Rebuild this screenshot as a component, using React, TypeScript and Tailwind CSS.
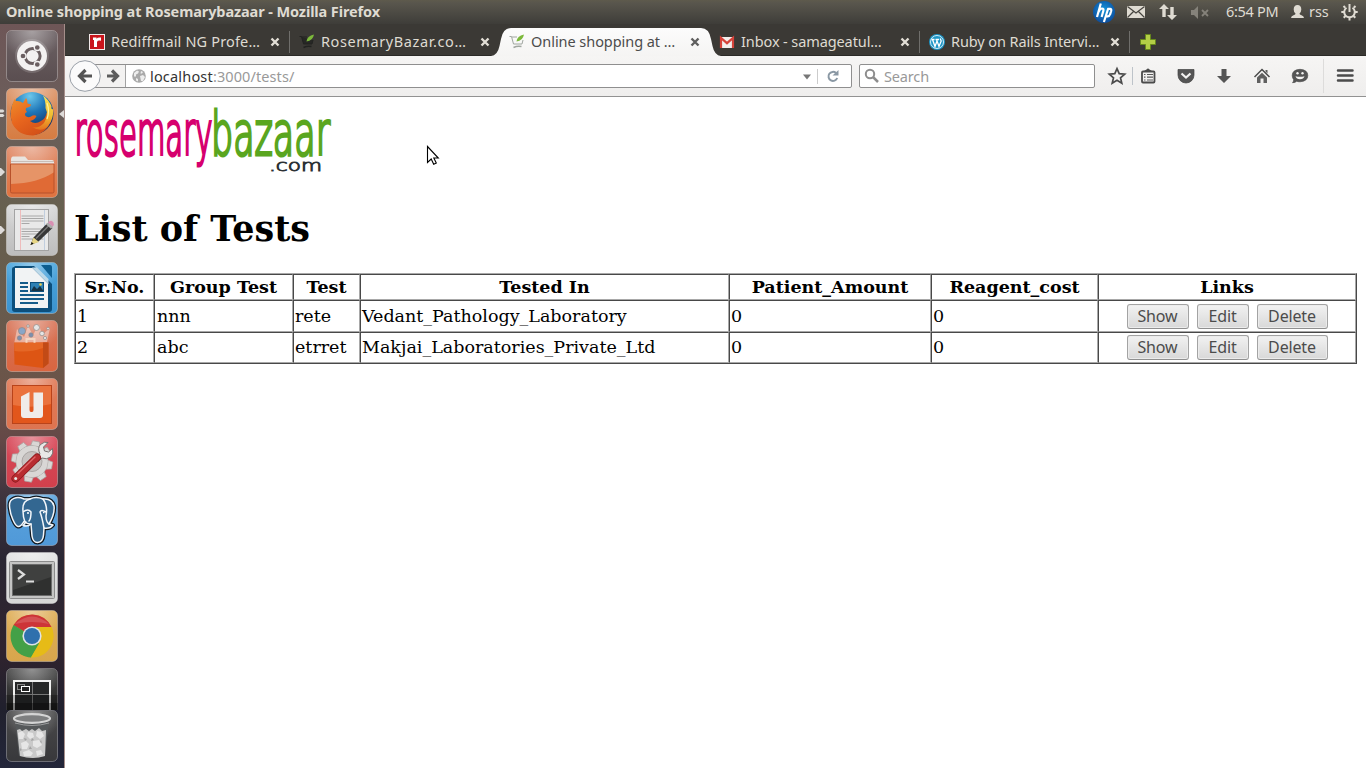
import type { ReactNode } from 'react';

const UI = "font-['Noto_Sans',sans-serif]";

/* ---------- launcher tiles ---------- */

function Tile({ from, to, children, h = 52, edge = '#ffffff' }: { from: string; to: string; children?: ReactNode; h?: number; edge?: string }) {
  const id = 'g' + from.slice(1) + to.slice(1) + h;
  return (
    <svg width="52" height={h} viewBox={`0 0 52 ${h}`} className="block shrink-0">
      <defs>
        <linearGradient id={id} x1="0" y1="0" x2="0" y2="1">
          <stop offset="0" stopColor={from} />
          <stop offset="1" stopColor={to} />
        </linearGradient>
        <radialGradient id={id + 's'} cx="0.5" cy="0" r="0.6">
          <stop offset="0" stopColor="#fff" stopOpacity="0.4" />
          <stop offset="1" stopColor="#fff" stopOpacity="0" />
        </radialGradient>
      </defs>
      <rect x="0.500" y="0.500" width="51" height="51" rx="5" fill={`url(#${id})`} stroke={edge} strokeOpacity="0.3" />
      <rect x="1" y="1" width="50" height="50" rx="5" fill={`url(#${id}s)`} />
      {children}
    </svg>
  );
}

function Dash() {
  return (
    <Tile from="#6d6265" to="#5a4e50">
      <circle cx="26" cy="26" r="17" fill="#fff" opacity="0.15" />
      <circle cx="26" cy="26" r="15" fill="#f3f1f1" />
      <circle cx="26.500" cy="26" r="7.600" fill="none" stroke="#6a5e60" strokeWidth="3" />
      <g fill="#6a5e60" stroke="#f3f1f1" strokeWidth="1.300">
        <circle cx="17" cy="26" r="3" />
        <circle cx="31.300" cy="17.500" r="3" />
        <circle cx="31.300" cy="34.500" r="3" />
      </g>
    </Tile>
  );
}

function FirefoxIcon() {
  return (
    <Tile from="#dc9468" to="#d67c42">
      <defs>
        <radialGradient id="globe" cx="0.45" cy="0.1" r="0.75">
          <stop offset="0" stopColor="#6cc8ec" />
          <stop offset="0.5" stopColor="#1f76b8" />
          <stop offset="1" stopColor="#12386f" />
        </radialGradient>
        <linearGradient id="fox" x1="0" y1="0" x2="0.7" y2="1">
          <stop offset="0" stopColor="#ee8f2c" />
          <stop offset="0.5" stopColor="#e8661e" />
          <stop offset="1" stopColor="#d24f18" />
        </linearGradient>
        <linearGradient id="tail" x1="0" y1="0" x2="0" y2="1">
          <stop offset="0" stopColor="#f7e25a" />
          <stop offset="0.6" stopColor="#f0bb30" />
          <stop offset="1" stopColor="#e4701e" />
        </linearGradient>
      </defs>
      <circle cx="26" cy="25.500" r="21.500" fill="url(#globe)" />
      <path d="M8 12Q9 10 10 13Q14 12.500 17 15L20 10Q22 12 21.500 15.500L25 16.500Q25.500 18.500 20 20Q19 22 21 24Q18 25 19.500 28Q22 30 25 28.500Q28 26.500 30.500 28Q29 32 24 33Q29 37 35 33Q40 30 40.500 25Q45 28 45 33Q40 46 27 47.500Q12 47.500 6 35Q2.500 24 8 12Z" fill="url(#fox)" />
      <path d="M37 7.500Q40 13 39.500 20Q43 27 38 35Q32 41 26 39Q36 45 42 38Q48 31 47 21Q45 22 45.500 18Q42 11 37 7.500Z" fill="url(#tail)" />
      <path d="M41 15Q44 23 41 31" fill="none" stroke="#fff3a0" strokeWidth="1.200" />
    </Tile>
  );
}

function FilesIcon() {
  return (
    <Tile from="#e08a68" to="#df7340">
      <path d="M5 14q0-3.500 2-3.500h12l3 3.500h24q2 0 2 2v5H5z" fill="#e8e4e0" />
      <path d="M5 15.500h43" stroke="#bcaea5" strokeWidth="0.700" />
      <path d="M4.500 18h43.500v27.500q0 1.500-1.500 1.500H6q-1.500 0-1.500-1.500z" fill="#e06a35" stroke="#b8512a" />
      <path d="M5 18.500h42.500v8Q32 37 5 38z" fill="#e9b088" opacity="0.6" />
    </Tile>
  );
}

function EditorIcon() {
  const rows = [12, 14.500, 17, 19.500, 25, 27.500, 30, 32.500, 35];
  return (
    <Tile from="#d8d8d8" to="#bdbdbd">
      <rect x="8.500" y="5.500" width="34" height="41" fill="#e9e9e9" stroke="#a3a3a3" />
      <path d="M14.500 6v40" stroke="#efb0b0" strokeWidth="0.800" />
      <path d="M38.500 6v40" stroke="#b6c6da" strokeWidth="0.800" />
      {rows.map((y, i) => <path key={y} d={`M15.500 ${y}h${i % 4 === 3 ? 8 : 22}`} stroke="#a0a0a0" strokeWidth="0.900" />)}
      <path d="M24.500 41l3-7.500L41 19.500l5.500 4.500-14 13.500z" fill="#373737" />
      <path d="M30 34.500L43 21.500" stroke="#777" strokeWidth="1.500" />
      <path d="M24.500 41l3-7.500 5.500 4.500z" fill="#e7d685" />
      <path d="M24.500 41l1.200-3 2 1.700z" fill="#111" />
      <path d="M40 20.500l2-2 5 4-2 2.200z" fill="#aaa" />
      <path d="M42 18.500q2-2.500 4-1.500l1.500 1.500q1 2-0.800 4z" fill="#d990b3" />
    </Tile>
  );
}

function WriterIcon() {
  return (
    <Tile from="#4ba6de" to="#3b93cf">
      <path d="M8 5q-2 0-2 2v40q0 3 3 3h34q3 0 3-3V22L28 4H9z" fill="#0c4f7c" />
      <path d="M35 3h9q2 0 2 2v11z" fill="#0c5d8f" />
      <path d="M9 6h17.500L42 21.500V46H9z" fill="#f1f3f4" />
      <path d="M26 5.500L42.500 22v-5L31 5.500z" fill="#bcd9e9" />
      <g stroke="#155c8a" strokeWidth="2">
        <path d="M14 21h8M14 25h8M14 29h8M14 33h24M14 37h24M14 41h18" />
      </g>
      <rect x="24.500" y="20.500" width="13" height="9" fill="#2d80b4" stroke="#0c4f7c" />
      <path d="M25 29l3-5 3 3 3-3 3.500 5z" fill="#173345" />
      <circle cx="34.500" cy="22.500" r="1.300" fill="#ecd04c" />
    </Tile>
  );
}

function SoftwareIcon() {
  return (
    <Tile from="#d8765a" to="#d96540">
      <path d="M8 24L11 9l7 8 4-11 5 9 6-11 3 11 8-7-3 14z" fill="#fff" opacity="0.4" />
      <g fill="#e5e5e5" stroke="#8f8a86" strokeWidth="0.700">
        <circle cx="16" cy="11" r="3.500" fill="#88a6c8" />
        <circle cx="30.500" cy="7.500" r="3" />
        <circle cx="36" cy="13.500" r="2.300" />
        <circle cx="25" cy="15" r="2.200" fill="#7b8fb0" />
        <circle cx="13.500" cy="18" r="2.200" fill="#7b8fb0" />
        <circle cx="42" cy="8.500" r="1.300" />
        <circle cx="39" cy="18" r="1.600" />
        <circle cx="22" cy="6" r="1.300" />
      </g>
      <path d="M8 22.500h34.500v21L37 48 8.500 44.500z" fill="#dd5514" />
      <path d="M37 22.500h5.500v21L37 48z" fill="#c24a16" />
      <path d="M20.500 23v-4h8v4" fill="none" stroke="#f4d6c2" strokeWidth="2" />
      <path d="M8.500 31q15 2 28.500-3v-5.500H8z" fill="#ee7a37" opacity="0.5" />
    </Tile>
  );
}

function UbuntuOneIcon() {
  return (
    <Tile from="#e07b58" to="#dd7450">
      <rect x="6.500" y="7.500" width="39" height="38" fill="#e2561c" stroke="#b9431a" />
      <path d="M7 8h38v18Q26 31 7 27z" fill="#ee7f4b" opacity="0.7" />
      <path d="M15 18.500L23.500 14V32q0 2 1.500 2h1q1.500 0 1.500-2V14.500H37V37q0 3-3 3H18q-3 0-3-3z" fill="#f0ece9" />
    </Tile>
  );
}

function SettingsIcon() {
  return (
    <Tile from="#d8495a" to="#d0404c">
      <g fill="#d9d7d5" stroke="#a9a5a3" strokeWidth="0.700">
        {[0, 45, 90, 135, 180, 225, 270, 315].map((a) => (
          <path key={a} d="M21.500 12l1.500-7h7l1.500 7z" transform={`rotate(${a + 10} 26 25.500)`} />
        ))}
        <circle cx="26" cy="25.500" r="16" />
      </g>
      <circle cx="26" cy="25.500" r="15.500" fill="#d9d7d5" />
      <circle cx="26" cy="25.500" r="10" fill="#c7c3c1" stroke="#aaa6a4" />
      <path d="M30 23l4-5q-3-6 0.500-9.500 4-3.500 7.500-2l-4.500 4.500 1 4 4 1 4-3.500q1.500 5-2 8.500-4 3-8.500 1l-4 4z" fill="#e9e8e7" stroke="#6d6866" strokeWidth="0.900" />
      <path d="M9.500 42.500L31 21.500" stroke="#8e1a1e" strokeWidth="8" strokeLinecap="round" />
      <path d="M9.500 42.500L31 21.500" stroke="#b82c30" strokeWidth="6.300" strokeLinecap="round" />
      <path d="M12 37.500L29 21" stroke="#e0686a" strokeWidth="1.300" strokeLinecap="round" />
      <circle cx="9.700" cy="42.500" r="1.500" fill="#e9e8e7" />
    </Tile>
  );
}

function PostgresIcon() {
  const body = 'M18 5C11 2 3 4 3.500 12C4 21 9 32 12 32.500C15 33 17 29 18 27.500C20 29 23 30.500 25 30L26 42Q27 48.500 31.500 48.500Q37 48 37.500 41L38 34Q44 35 47 31L43 30Q49 20 48 12Q46 4 37 5Q30 2 24 5Z';
  return (
    <Tile from="#5aa3dd" to="#5099d8">
      <path d={body} stroke="#111820" strokeWidth="4" fill="#336791" strokeLinejoin="round" />
      <g stroke="#f2f6fa" strokeWidth="1.500" fill="#336791" strokeLinejoin="round" strokeLinecap="round">
        <path d={body} />
        <path d="M24 5Q16 7 17 17Q17 23 19 28M17 18Q22 14 25 18Q25 25 23 27M25 30Q22 33 17 31.500L20 28M37 5Q42 12 40 22Q40 28 43 30M40 18Q35 15 34 18Q36 23 38 34" fill="none" />
      </g>
      <path d="M21 19h2M37 18.500h1.500" stroke="#fff" strokeWidth="1.500" />
    </Tile>
  );
}

function TerminalIcon() {
  return (
    <Tile from="#e3e3e3" to="#d6d6d6">
      <rect x="3.500" y="9.500" width="45" height="37" rx="1" fill="#c4c4c3" stroke="#8b8b8b" />
      <rect x="6.500" y="12.500" width="39" height="31" fill="#2f302f" stroke="#6c6c6c" />
      <path d="M7 13h38v12L7 38z" fill="#fff" opacity="0.08" />
      <path d="M12 18l6 4.500-6 4.500" fill="none" stroke="#dcdcdc" strokeWidth="2.200" />
      <path d="M20 29.500h8" stroke="#dcdcdc" strokeWidth="2" />
    </Tile>
  );
}

function ChromeIcon() {
  return (
    <Tile from="#dfae58" to="#d8a64c">
      <circle cx="26" cy="26" r="21.300" fill="#e6b916" />
      <path d="M26 26L7.300 15.200A21.500 21.500 0 0 1 45.500 17z" fill="#cd3437" />
      <path d="M26 26L7.600 15A21.500 21.500 0 0 0 25 47.500l8-14z" fill="#43a047" />
      <path d="M26 17h19.500A21.500 21.500 0 0 1 25 47.500L35 31z" fill="#e6bb17" />
      <circle cx="26" cy="26" r="9.600" fill="#dfe3e6" />
      <circle cx="26" cy="26" r="8" fill="#2f70ad" />
      <path d="M9 14q17-15 34 0-17-4-34 0z" fill="#fff" opacity="0.15" />
    </Tile>
  );
}

function WorkspaceIcon() {
  return (
    <Tile from="#4a4a4a" to="#1b1b1b" h={42}>
      <path d="M8 42V13h36v29" fill="#262728" stroke="#f2f2f2" strokeWidth="2" />
      <path d="M26.500 14v28M9 26.500h34" stroke="#777" strokeWidth="1" />
      <rect x="11.500" y="16.500" width="7" height="5" fill="none" stroke="#888" />
      <rect x="15.500" y="18.500" width="8" height="5" fill="#222" stroke="#fff" />
      <rect x="0" y="27" width="52" height="8" fill="#000" opacity="0.25" />
      <rect x="0" y="35" width="52" height="7" fill="#000" opacity="0.5" />
    </Tile>
  );
}

function TrashIcon() {
  return (
    <Tile from="#4a4a4b" to="#38383b">
      <path d="M9 9l4 37q13 3.500 26 0l4-37z" fill="#55585a" />
      <path d="M11 20l3-1 2 2 4-2 3 2 3-2 3 2 4-3 3 3 4-1-1 26q-12 4-25 0z" fill="#c9c9c9" />
      <g fill="#e6e6e6">
        <path d="M12 23l4-2 3 3-2 5-4 0zM22 22l5 1 1 4-4 2-3-3zM31 21l5 1 2 4-4 3-4-3zM15 33l5-2 3 3-2 5-5 0zM27 31l6-1 3 5-5 3-4-2zM17 42l6-2 4 3-2 3-7 0zM30 41l5-1 2 4-6 2z" />
      </g>
      <g fill="#a2a2a2">
        <path d="M18 28l3 1-2 2zM26 28l2 2-3 1zM24 36l2 3-3 0zM35 30l1 3-2-1zM14 38l2 2-2 1z" />
      </g>
      <ellipse cx="26" cy="8.500" rx="18" ry="4.300" fill="#7e7f80" stroke="#d4d4d4" strokeWidth="2.200" />
      <path d="M9 13q17 5 34 0" fill="none" stroke="#9d9e9f" strokeWidth="1" />
    </Tile>
  );
}

function Row({ left, right, children }: { left?: 'one' | 'two'; right?: boolean; children: ReactNode }) {
  return (
    <div className="flex w-[64px] shrink-0 items-center">
      <svg width="6" height="14" viewBox="0 0 6 14" className="block shrink-0" fill="#dedbd9">
        {left === 'one' && <path d="M0 3h1l4 4-4 4H0z" />}
        {left === 'two' && <path d="M0 2.500h3l1.500 1.500-1.500 1.500H0zM0 7h3l1.500 1.500L3 10H0z" />}
      </svg>
      {children}
      <svg width="6" height="14" viewBox="0 0 6 14" className="block shrink-0" fill="#dedbd9">
        {right && <path d="M6 3L1 7l5 4z" />}
      </svg>
    </div>
  );
}

function Launcher() {
  return (
    <aside className="flex w-[65px] shrink-0 flex-col gap-[6px] overflow-hidden border-r border-[#a58e8a] bg-[linear-gradient(180deg,#6e5657_0%,#6b5e5b_12%,#67604f_25%,#685b4d_38%,#6b5348_50%,#644847_56%,#40353f_63%,#2a2633_72%,#30232e_84%,#20202d_92%,#23263a_100%)] pt-[6px]">
      <Row><Dash /></Row>
      <Row left="two" right><FirefoxIcon /></Row>
      <Row left="one"><FilesIcon /></Row>
      <Row left="one"><EditorIcon /></Row>
      <Row><WriterIcon /></Row>
      <Row><SoftwareIcon /></Row>
      <Row><UbuntuOneIcon /></Row>
      <Row><SettingsIcon /></Row>
      <Row><PostgresIcon /></Row>
      <Row><TerminalIcon /></Row>
      <Row><ChromeIcon /></Row>
      <div className="flex flex-col">
        <Row><WorkspaceIcon /></Row>
        <Row><TrashIcon /></Row>
      </div>
    </aside>
  );
}

/* ---------- top panel ---------- */

function TopPanel() {
  return (
    <header className={`flex h-[24px] shrink-0 items-center bg-[linear-gradient(180deg,#5e5a4c_0%,#59564d_12%,#3e3d39_100%)] text-[#dfdbd2] ${UI}`}>
      <h1 className="w-[1092px] shrink-0 whitespace-nowrap pb-[2px] pl-[6px] text-[14.500px] font-bold leading-[22px] tracking-[-0.100px]">Online shopping at Rosemarybazaar - Mozilla Firefox</h1>
      <svg width="24" height="24" viewBox="0 0 24 24" className="shrink-0">
        <defs>
          <radialGradient id="hp" cx="0.5" cy="0.4" r="0.6">
            <stop offset="0" stopColor="#1596dc" />
            <stop offset="1" stopColor="#0c4c9c" />
          </radialGradient>
        </defs>
        <circle cx="12" cy="12" r="11" fill="url(#hp)" />
        <path d="M8.800 3.500L5 17M6.500 12q1.500-3.500 3.500-3.500t1.300 2.500l-1.700 6M16.200 8.500l-4.300 13.500M15.500 8.800h2.500q1.800 0 1.100 2.500l-1 3q-.6 2-2.400 2h-2" fill="none" stroke="#fff" strokeWidth="2.200" />
      </svg>
      <svg width="40" height="24" viewBox="0 0 40 24" className="shrink-0" fill="#dfdbd2">
        <rect x="11" y="6" width="18" height="12" />
        <path d="M11.500 6.500l8.500 6.500 8.500-6.500M11.500 17.500l6-6M28.500 17.500l-6-6" fill="none" stroke="#46443f" strokeWidth="1.200" />
      </svg>
      <svg width="28" height="24" viewBox="0 0 28 24" className="shrink-0" fill="#dfdbd2">
        <path d="M8 4l5 5h-3.300v8H6.300V9H3zM16 20l-5-5h3.300V7h3.400v8H21z" />
      </svg>
      <svg width="34" height="24" viewBox="0 0 34 24" className="shrink-0" fill="#85827a">
        <path d="M7 10h3l4-4v13l-4-4H7z" />
        <path d="M18 10l6 6M24 10l-6 6" stroke="#85827a" strokeWidth="1.800" />
      </svg>
      <span className="ml-[8px] w-[60px] whitespace-nowrap pb-[2px] text-[14.500px] leading-[22px] tracking-[-0.300px]">6:54 PM</span>
      <svg width="18" height="24" viewBox="0 0 18 24" className="shrink-0" fill="#dfdbd2">
        <path d="M11.500 5q3.800 0 3.800 4.500 0 2.500-1.800 4 0 1 1.500 1.500 3 1 3 3H5q0-2 3-3 1.500-.5 1.500-1.500-1.800-1.500-1.800-4Q7.700 5 11.500 5z" />
      </svg>
      <span className="ml-[5px] w-[30px] pb-[2px] text-[14.500px] leading-[22px] tracking-[-0.100px]">rss</span>
      <svg width="20" height="24" viewBox="0 0 20 24" className="shrink-0" fill="none" stroke="#dfdbd2">
        <path d="M7.500 7.700a5.300 5.300 0 1 0 6 0" strokeWidth="2" />
        <path d="M10.500 4v8" strokeWidth="2" />
        <path d="M15.700 12h3M2.300 12h3M14.300 15.800l2 2M6.700 15.800l-2 2M10.500 17.500v3M14.800 7.700l1.700-1.700M6.200 7.700L4.500 6" strokeWidth="2" />
      </svg>
    </header>
  );
}

/* ---------- tabs ---------- */

function CartLeaf({ dark }: { dark?: boolean }) {
  const c = dark ? '#222321' : '#a0a6a0';
  return (
    <svg width="16" height="16" viewBox="0 0 16 16" className="shrink-0">
      <path d="M0.500 2.500h2l2 7.500h8.500l1-4M3 3h5" fill={dark ? '#272725' : 'none'} stroke={c} strokeWidth="1" />
      <path d="M4.500 13.500q4-2 8-1" stroke={c} strokeWidth="1.500" fill="none" />
      <path d="M7.500 7.500Q8 2 15 0.500 14 6.500 7.500 7.500z" fill="#7cb93b" />
    </svg>
  );
}

function RediffIcon() {
  return (
    <svg width="16" height="16" viewBox="0 0 16 16" className="shrink-0">
      <rect x="0.500" y="0.500" width="15" height="15" fill="#c9141b" stroke="#f1e9e9" />
      <path d="M4 3.500h3.500v1.200q1-1.500 4.500-1.200v3.200q-3.500-.5-4 1.300V13H5V6H4z" fill="#fff" />
    </svg>
  );
}

function GmailIcon() {
  return (
    <svg width="16" height="16" viewBox="0 0 16 16" className="shrink-0">
      <rect x="1" y="3" width="14" height="11" fill="#f2efee" />
      <path d="M2 14V4l6 5.200L14 4v10" fill="none" stroke="#d5433a" strokeWidth="2.200" />
    </svg>
  );
}

function WordPressIcon() {
  return (
    <svg width="16" height="16" viewBox="0 0 16 16" className="shrink-0">
      <circle cx="8" cy="8" r="8" fill="#1d95c6" />
      <circle cx="8" cy="8" r="6.500" fill="none" stroke="#fff" strokeWidth="0.800" />
      <path d="M2.500 5.500h3M6.500 5.500h3.500M3.500 5.500L6 12.500l2-5.500M7.500 5.500l2.500 7 2.200-5.500-1-2.500" fill="none" stroke="#fff" strokeWidth="1.300" />
    </svg>
  );
}

function Tab({ icon, label, active, sep, track }: { icon: ReactNode; label: string; active?: boolean; sep?: boolean; track: string }) {
  return (
    <div className="relative flex h-[32px] w-[210px] shrink-0 items-center">
      {active && (
        <svg width="232" height="32" viewBox="0 0 232 32" className="absolute -left-[9px] top-0">
          <defs>
            <linearGradient id="tabfill" x1="0" y1="0" x2="0" y2="1">
              <stop offset="0" stopColor="#fcfcfc" />
              <stop offset="1" stopColor="#f5f4f3" />
            </linearGradient>
          </defs>
          <path d="M0 32Q6.500 31.500 8.500 22L10 15Q12 4 20 4H210Q218 4 220 15L221.500 22Q223.500 31.500 230 32z" fill="url(#tabfill)" />
        </svg>
      )}
      <div className="relative flex w-full items-center pl-[9px] pt-[4px]">
        {icon}
        <span className={`ml-[6px] w-[158px] whitespace-nowrap pb-[2px] text-[14.500px] leading-[18px] ${track} ${active ? 'text-[#4c4c4c]' : 'text-[#dfdbd2]'}`}>{label}</span>
        <svg width="12" height="12" viewBox="0 0 12 12" className="shrink-0">
          <path d="M2.500 2.500l7 7M9.500 2.500l-7 7" stroke={active ? '#5f5f5f' : '#e2ded6'} strokeWidth="2.400" />
        </svg>
      </div>
      {sep && <div className="absolute right-0 top-[7px] h-[22px] w-px bg-[#6f6e6b]" />}
    </div>
  );
}

function TabStrip() {
  return (
    <div className="flex h-[32px] shrink-0 items-center bg-[#3b3935] pl-[15px] shadow-[inset_0_-1px_0_#2b2a27]">
      <Tab icon={<RediffIcon />} label="Rediffmail NG Profe…" track="tracking-[0.150px]" sep />
      <Tab icon={<CartLeaf dark />} label="RosemaryBazar.co…" track="tracking-[0.600px]" />
      <Tab icon={<CartLeaf />} label="Online shopping at …" track="tracking-[-0.050px]" active />
      <Tab icon={<GmailIcon />} label="Inbox - samageatul…" track="tracking-[-0.100px]" sep />
      <Tab icon={<WordPressIcon />} label="Ruby on Rails Intervi…" track="tracking-[-0.100px]" sep />
      <svg width="16" height="16" viewBox="0 0 16 16" className="ml-[10px] mt-[4px] shrink-0">
        <path d="M5.500 .5h5v5h5v5h-5v5h-5v-5h-5v-5h5z" fill="#b4cf46" stroke="#67881c" />
      </svg>
    </div>
  );
}

/* ---------- toolbar ---------- */

function Toolbar() {
  return (
    <div className="flex h-[41px] shrink-0 items-center border-b border-[#929292] bg-[linear-gradient(180deg,#f6f5f4,#efeeed)] pl-[4px]">
      <svg width="32" height="34" viewBox="0 0 32 34" className="relative z-10 shrink-0">
        <circle cx="16" cy="17" r="15.300" fill="#fbfbfb" stroke="#9aa0a8" />
        <path d="M23 17H11.500M16.500 11L10.500 17l6 6" fill="none" stroke="#555" strokeWidth="3.200" />
      </svg>
      <div className="-ml-[12px] flex h-[24px] w-[763px] shrink-0 items-center rounded-r-[2px] border border-[#8f8f8f] bg-white">
        <svg width="36" height="22" viewBox="0 0 36 22" className="shrink-0">
          <rect width="35" height="22" fill="#f3f2f1" />
          <rect x="35" width="1" height="22" fill="#a2a2a2" />
          <path d="M17 11h9.500M22 5.500L27.500 11 22 16.500" fill="none" stroke="#5c5c5c" strokeWidth="3.200" />
        </svg>
        <svg width="14" height="14" viewBox="0 0 14 14" className="ml-[6px] shrink-0">
          <circle cx="7" cy="7" r="6.800" fill="#a9a9a9" />
          <path d="M2 4l3-2.500 2 1-1 2-2 1v2l-2 0zM8 7l3-1 2 2-2 4-2 0zM9 2l2 1-1 1.500-1.500 0zM4 9l2 1v2.500l-2-1z" fill="#ededed" />
        </svg>
        <span className={`ml-[4px] w-[649px] whitespace-nowrap text-[14.500px] leading-5 text-[#999] ${UI}`}><span className="tracking-[0.180px] text-[#333]">localhost</span><span className="tracking-[0.100px]">:3000/tests/</span></span>
        <svg width="50" height="22" viewBox="0 0 50 22" className="shrink-0">
          <path d="M4 9.500h8l-4 5z" fill="#777" />
          <rect x="18" y="4" width="1" height="15" fill="#ccc" />
          <path d="M37 8a4.500 4.500 0 1 0 1.200 5" fill="none" stroke="#8a98a4" strokeWidth="2" />
          <path d="M39.500 5v5.500h-6z" fill="#8a98a4" />
        </svg>
      </div>
      <div className={`ml-[7px] flex h-[24px] w-[236px] shrink-0 items-center rounded-[2px] border border-[#8f8f8f] bg-white ${UI}`}>
        <svg width="24" height="22" viewBox="0 0 24 22" className="shrink-0">
          <circle cx="10" cy="9" r="4.200" fill="none" stroke="#8d8d8d" strokeWidth="2" />
          <path d="M13 12l5 5" stroke="#8d8d8d" strokeWidth="2.500" />
        </svg>
        <span className="text-[14.500px] leading-5 tracking-[-0.150px] text-[#999]">Search</span>
      </div>
      <svg width="271" height="40" viewBox="1095 56 271 40" className="shrink-0">
        <path d="M1117 68.700l2.200 5 5.500.5-4.200 3.600 1.300 5.400-4.800-2.900-4.800 2.900 1.300-5.400-4.200-3.600 5.500-.5z" fill="none" stroke="#4b4b4b" strokeWidth="1.700" />
        <path d="M1132.500 67v18" stroke="#bdc3c9" />
        <rect x="1142" y="71.500" width="12.500" height="11" rx="1" fill="none" stroke="#4b4b4b" strokeWidth="1.800" />
        <path d="M1144 71l2.500-1.500q1.500-2 3 0L1152 71z" fill="#4b4b4b" />
        <path d="M1144 74.500h1.500M1147 74.500h6M1144 77.200h1.500M1147 77.200h6M1144 80h1.500M1147 80h6" stroke="#5a5a5a" strokeWidth="1.200" />
        <path d="M1178 69.500h16v5.500a8 8 0 0 1-16 0z" fill="#555" stroke="#444" strokeWidth=".7" />
        <path d="M1181.500 73.500l4.500 4 4.500-4" fill="none" stroke="#f3f2f1" strokeWidth="2.200" />
        <path d="M1221.500 69h5v7h4.500l-7 7-7-7h4.500z" fill="#555" />
        <path d="M1254.500 77l7.500-7.500 7.500 7.500" fill="none" stroke="#4b4b4b" strokeWidth="1.500" />
        <path d="M1257 77.500l5-4.800 5 4.800v5.500h-3.500v-4.500h-3v4.500h-3.500zM1265.500 70h2v3.500l-2-2z" fill="#606060" />
        <path d="M1300 69.300q7.800.5 7.800 6.200t-7.800 6.300q-1.800 0-3.300-.6-1.500 1.500-4.200 1.500 1.300-1.400 1.200-3-1.500-1.900-1.500-4.200 0-5.700 7.800-6.200z" fill="#555" stroke="#444" strokeWidth=".6" />
        <path d="M1295.500 76.300q4.500 1 9 0-.8 3-4.500 3t-4.500-3z" fill="#f3f2f1" />
        <circle cx="1297.500" cy="73.200" r="1.200" fill="#f3f2f1" />
        <circle cx="1302.500" cy="73.200" r="1.200" fill="#f3f2f1" />
        <path d="M1323.500 59v34" stroke="#dddcdb" />
        <path d="M1338 70.500h14.500M1338 75.500h14.500M1338 80.500h14.500" stroke="#4b4b4b" strokeWidth="2.500" strokeLinecap="round" />
      </svg>
    </div>
  );
}

/* ---------- page ---------- */

function BrandMark() {
  return (
    <svg width="260" height="74" viewBox="74 103 260 74" className="block overflow-visible font-['DejaVu_Sans_Light','DejaVu_Sans',sans-serif] font-extralight">
      <text x="74.500" y="155" fontSize="60" textLength="138" lengthAdjust="spacingAndGlyphs" fill="#d6006e" stroke="#d6006e" strokeWidth="3.200">rosemary</text>
      <text x="211" y="155" fontSize="60" textLength="119" lengthAdjust="spacingAndGlyphs" fill="#5aa61f" stroke="#5aa61f" strokeWidth="3.200">bazaar</text>
      <text x="269" y="171.200" fontSize="15.500" textLength="53" lengthAdjust="spacingAndGlyphs" fill="#2c3135" stroke="#2c3135" strokeWidth="0.900">.com</text>
    </svg>
  );
}

const headers = ['Sr.No.', 'Group Test', 'Test', 'Tested In', 'Patient_Amount', 'Reagent_cost', 'Links'];
const tests = [
  { cells: ['1', 'nnn', 'rete', 'Vedant_Pathology_Laboratory', '0', '0'], h: 'h-[32px]', pb: 'pb-px' },
  { cells: ['2', 'abc', 'etrret', 'Makjai_Laboratories_Private_Ltd', '0', '0'], h: 'h-[31px]', pb: 'pb-[3px]' },
];
const cellBorder = 'border border-t-[#484848] border-l-[#484848] border-r-[#a8a8a8] border-b-[#a8a8a8]';

function ActionButton({ label, w }: { label: string; w: string }) {
  return (
    <button className={`flex h-[25px] items-start justify-center rounded-[3px] border border-[#a3a3a3] border-b-[#8f8f8f] bg-[linear-gradient(180deg,#f2f2f2,#d8d8d8)] text-[16px] leading-[22px] tracking-[-0.150px] text-[#4c4c4c] shadow-[inset_0_0_0_1px_#ececec] ${w} ${UI}`}>{label}</button>
  );
}

function TestsTable() {
  return (
    <table className="w-[1283px] table-fixed border-separate border-spacing-0 border border-b-[#484848] border-l-[#a8a8a8] border-r-[#484848] border-t-[#a8a8a8] text-[17.500px] leading-[20px] text-black">
      <colgroup>
        <col className="w-[79px]" /><col className="w-[139px]" /><col className="w-[67px]" /><col className="w-[369px]" />
        <col className="w-[202px]" /><col className="w-[167px]" /><col className="w-[258px]" />
      </colgroup>
      <thead>
        <tr className="h-[26px]">
          {headers.map((h) => <th key={h} className={`${cellBorder} whitespace-nowrap p-px text-center font-bold`}>{h}</th>)}
        </tr>
      </thead>
      <tbody>
        {tests.map((t) => (
          <tr key={t.cells[0]} className={t.h}>
            {t.cells.map((c, i) => <td key={i} className={`${cellBorder} ${t.pb} ${i === 1 ? 'pl-[2px]' : 'pl-px'} whitespace-nowrap pr-px pt-px`}>{c}</td>)}
            <td className={`${cellBorder} p-px`}>
              <div className="flex justify-center gap-[8px]">
                <ActionButton label="Show" w="w-[62px]" />
                <ActionButton label="Edit" w="w-[52px]" />
                <ActionButton label="Delete" w="w-[71px]" />
              </div>
            </td>
          </tr>
        ))}
      </tbody>
    </table>
  );
}

export default function App() {
  return (
    <div className="relative flex h-[768px] w-[1366px] flex-col overflow-hidden bg-white">
      <TopPanel />
      <div className="flex min-h-0 flex-1">
        <Launcher />
        <div className={`flex min-w-0 flex-1 flex-col ${UI}`}>
          <TabStrip />
          <Toolbar />
          <main className="flex-1 bg-white pl-[9px] pt-[6px] font-['DejaVu_Serif',serif]">
            <BrandMark />
            <h2 className="mb-[24px] mt-[32px] text-[34.950px] font-bold leading-[40px] text-black">List of Tests</h2>
            <TestsTable />
          </main>
        </div>
      </div>
      <svg width="14" height="20" viewBox="0 0 14 20" className="absolute left-[426px] top-[145px]">
        <path d="M1.500 1.500v16l3.700-3.500 2.500 5.300 2.600-1.200-2.500-5.100h4.500z" fill="#fff" stroke="#000" strokeWidth="1.100" />
      </svg>
    </div>
  );
}
